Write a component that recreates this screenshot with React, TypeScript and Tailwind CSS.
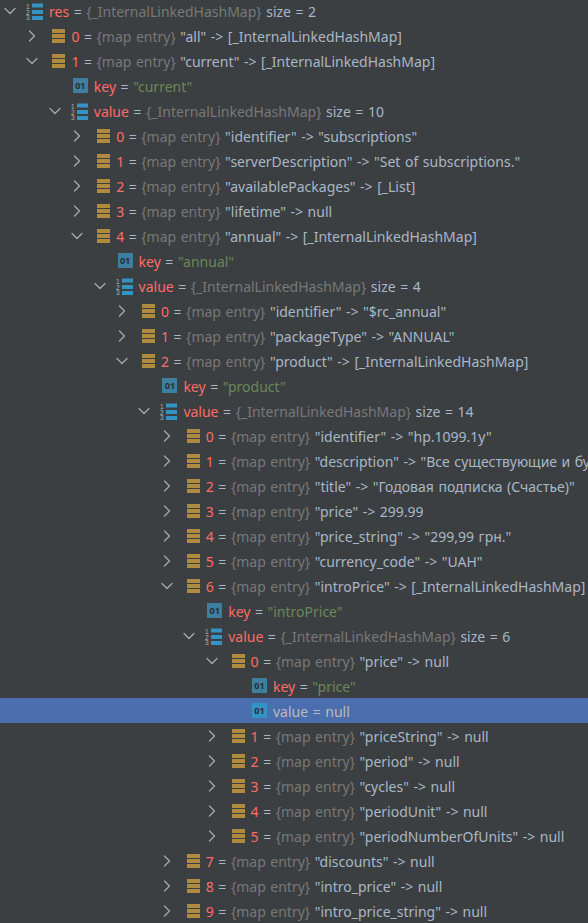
import { ChevronDown, ChevronRight } from "lucide-react";

type Kind = "list" | "entry" | "prim";
type Row = {
  level: number;
  kind: Kind;
  open?: boolean;
  name: string;
  type?: string;
  value?: string;
  green?: boolean;
  selected?: boolean;
};

const MAP = "{_InternalLinkedHashMap}";
const ENTRY = "{map entry}";

const e = (level: number, name: string, value: string, open?: boolean): Row => ({
  level,
  kind: "entry",
  name,
  type: ENTRY,
  value,
  open,
});
const key = (level: number, value: string): Row => ({ level, kind: "prim", name: "key", value, green: true });
const map = (level: number, name: string, size: number): Row => ({
  level,
  kind: "list",
  open: true,
  name,
  type: MAP,
  value: `size = ${size}`,
});

const rows: Row[] = [
  map(0, "res", 2),
  e(1, "0", '"all" -> [_InternalLinkedHashMap]'),
  e(1, "1", '"current" -> [_InternalLinkedHashMap]', true),
  key(2, '"current"'),
  map(2, "value", 10),
  e(3, "0", '"identifier" -> "subscriptions"'),
  e(3, "1", '"serverDescription" -> "Set of subscriptions."'),
  e(3, "2", '"availablePackages" -> [_List]'),
  e(3, "3", '"lifetime" -> null'),
  e(3, "4", '"annual" -> [_InternalLinkedHashMap]', true),
  key(4, '"annual"'),
  map(4, "value", 4),
  e(5, "0", '"identifier" -> "$rc_annual"'),
  e(5, "1", '"packageType" -> "ANNUAL"'),
  e(5, "2", '"product" -> [_InternalLinkedHashMap]', true),
  key(6, '"product"'),
  map(6, "value", 14),
  e(7, "0", '"identifier" -> "hp.1099.1y"'),
  e(7, "1", '"description" -> "Все существующие и будущие функции"'),
  e(7, "2", '"title" -> "Годовая подписка (Счастье)"'),
  e(7, "3", '"price" -> 299.99'),
  e(7, "4", '"price_string" -> "299,99 грн."'),
  e(7, "5", '"currency_code" -> "UAH"'),
  e(7, "6", '"introPrice" -> [_InternalLinkedHashMap]', true),
  key(8, '"introPrice"'),
  map(8, "value", 6),
  e(9, "0", '"price" -> null', true),
  key(10, '"price"'),
  { level: 10, kind: "prim", name: "value", value: "null", selected: true },
  e(9, "1", '"priceString" -> null'),
  e(9, "2", '"period" -> null'),
  e(9, "3", '"cycles" -> null'),
  e(9, "4", '"periodUnit" -> null'),
  e(9, "5", '"periodNumberOfUnits" -> null'),
  e(7, "7", '"discounts" -> null'),
  e(7, "8", '"intro_price" -> null'),
  e(7, "9", '"intro_price_string" -> null'),
];

const ListIcon = () => (
  <svg width="17" height="17" viewBox="0 0 17 17" className="mt-[2px] shrink-0">
    <text x="0" y="5.5" fontSize="6.5" fill="#afb1b3" fontFamily="Liberation Sans">1</text>
    <text x="0" y="11.5" fontSize="6.5" fill="#afb1b3" fontFamily="Liberation Sans">2</text>
    <text x="0" y="17" fontSize="6.5" fill="#afb1b3" fontFamily="Liberation Sans">3</text>
    <rect x="6" y="0.5" width="11" height="4" fill="#3592c4" />
    <rect x="6" y="7" width="11" height="4" fill="#3592c4" />
    <rect x="6" y="13" width="11" height="4" fill="#3592c4" />
  </svg>
);

const EntryIcon = () => (
  <svg width="13" height="14" viewBox="0 0 13 14" className="shrink-0">
    <rect x="0" y="0" width="13" height="4" fill="#b08a3e" />
    <rect x="0" y="5" width="13" height="4" fill="#b08a3e" />
    <rect x="0" y="10" width="13" height="4" fill="#b08a3e" />
  </svg>
);

const PrimIcon = ({ selected }: { selected?: boolean }) => (
  <div
    className={`flex h-[15px] w-[15px] shrink-0 items-center justify-center text-[9px] font-bold leading-none text-[#2b2d30] ${
      selected ? "bg-[#3592c4]" : "bg-[#3d7f9f]"
    }`}
  >
    01
  </div>
);

const TreeRow = ({ row }: { row: Row }) => {
  const Chevron = row.open ? ChevronDown : ChevronRight;
  const hasChevron = row.kind !== "prim";
  return (
    <div
      className={`flex h-[25px] shrink-0 items-center whitespace-nowrap ${row.selected ? "bg-[#4b6eaf]" : ""}`}
      style={{ paddingLeft: 2 + row.level * 22.4 }}
    >
      <div className="flex w-[16px] shrink-0 justify-center">
        {hasChevron && <Chevron size={20} strokeWidth={1.6} className="shrink-0 text-[#a4a7a9]" />}
      </div>
      <div className="flex w-[28px] shrink-0 justify-end pr-[3px]">
        {row.kind === "list" && <ListIcon />}
        {row.kind === "entry" && <EntryIcon />}
        {row.kind === "prim" && <PrimIcon selected={row.selected} />}
      </div>
      <span className="pl-[3px] pt-[2px] [word-spacing:0.9px]">
        <span className={row.selected ? "text-[#bbbbbb]" : "text-[#ff6b68]"}>{row.name}</span>
        <span className={row.selected ? "text-[#bbbbbb]" : "text-[#a9b7c6]"}> = </span>
        {row.type && <span className="text-[#787878]">{row.type} </span>}
        <span className={row.selected ? "text-[#bbbbbb]" : row.green ? "text-[#6a8759]" : "text-[#a9b7c6]"}>
          {row.value}
        </span>
      </span>
    </div>
  );
};

export default function App() {
  return (
    <div className="flex h-[923px] w-[588px] flex-col overflow-hidden bg-[#3c3f41] font-['Noto_Sans',sans-serif] text-[14px]">
      <div className="mt-[-2px] flex flex-col">
        {rows.map((row, i) => (
          <TreeRow key={i} row={row} />
        ))}
      </div>
    </div>
  );
}
